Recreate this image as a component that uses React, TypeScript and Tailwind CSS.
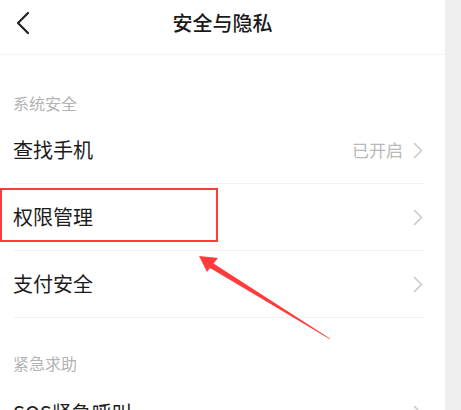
import React from "react";

const Chevron = () => (
  <svg width="10" height="17" viewBox="0 0 10 17" fill="none">
    <path d="M1.5 1.5L8.5 8.5L1.5 15.5" stroke="#c9c9c9" strokeWidth="1.6" strokeLinecap="round" strokeLinejoin="round" />
  </svg>
);

const Row = ({ label, value }: { label: string; value?: string }) => (
  <div className="mx-[13px] mr-[20px] h-[67px] flex items-center justify-between border-b border-[#f2f2f2]">
    <span className="text-[20px] leading-[24px] text-[#1c1c1c]">{label}</span>
    <div className="flex items-center gap-[10px] pr-[2px]">
      {value && <span className="text-[17px] text-[#b9b9b9]">{value}</span>}
      <Chevron />
    </div>
  </div>
);

export default function App() {
  return (
    <div
      className="w-[461px] h-[410px] overflow-hidden flex bg-[#efefef]"
      style={{ fontFamily: '"Noto Sans CJK SC", "Noto Sans", sans-serif' }}
    >
      <div className="relative w-[445px] h-full bg-white">
        {/* Header */}
        <header className="h-[55px] relative flex items-center justify-center border-b border-[#f4f4f4]">
          <svg className="absolute left-[15px] top-[11px]" width="16" height="24" viewBox="0 0 16 24" fill="none">
            <path d="M13 2L3 12L13 22" stroke="#222" strokeWidth="2.2" strokeLinecap="round" strokeLinejoin="round" />
          </svg>
          <h1 className="text-[20px] font-medium text-[#1a1a1a] -mt-[9px]">安全与隐私</h1>
        </header>

        {/* Section 1 */}
        <div className="h-[62px] flex items-end pb-[4px] px-[13px]">
          <span className="text-[16px] leading-[20px] text-[#b3b3b3]">系统安全</span>
        </div>
        <Row label="查找手机" value="已开启" />
        <Row label="权限管理" />
        <Row label="支付安全" />

        {/* Section 2 */}
        <div className="h-[62px] flex items-end pb-[7px] px-[13px]">
          <span className="text-[16px] leading-[20px] text-[#b3b3b3]">紧急求助</span>
        </div>
        <Row label="SOS紧急呼叫" />

        {/* Annotation */}
        <div className="absolute left-0 top-[188px] w-[218px] h-[54px] border-2 border-[#ff3b3b]" />
        <svg className="absolute left-0 top-0" width="445" height="410" viewBox="0 0 445 410">
          <path d="M199 256 L218 258 L213.5 263.5 L330 338.5 L329.5 339 L210 268 L207 272 Z" fill="#ff3b3b" />
        </svg>
      </div>
    </div>
  );
}
